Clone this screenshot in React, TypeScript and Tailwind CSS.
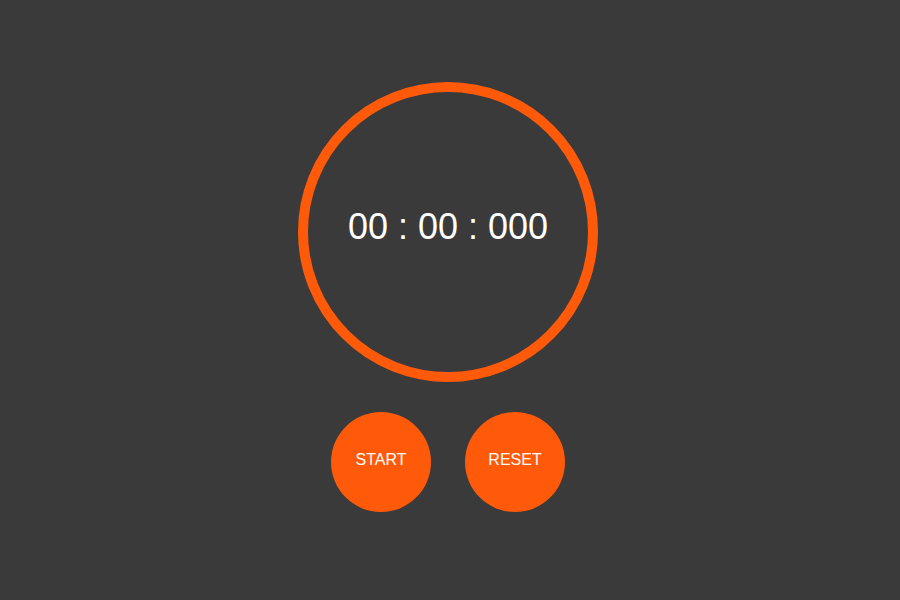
export default function App() {
  return (
    <div
      className="w-full h-[600px] bg-[#3a3a3a] flex flex-col items-center pt-[82px] pr-[4px]"
      style={{ fontFamily: '"Liberation Sans", Arial, sans-serif' }}
    >
      <div className="w-[300px] h-[300px] rounded-full border-[10px] border-[#ff5a0a] flex items-center justify-center box-border">
        <span className="text-[36px] text-white mb-[11px] whitespace-pre leading-none">00 : 00 : 000</span>
      </div>
      <div className="flex gap-[34px] mt-[30px]">
        <button className="w-[100px] h-[100px] rounded-full bg-[#ff5a0a] text-white text-[16px] flex items-center justify-center pb-[4px]">
          START
        </button>
        <button className="w-[100px] h-[100px] rounded-full bg-[#ff5a0a] text-white text-[16px] flex items-center justify-center pb-[4px]">
          RESET
        </button>
      </div>
    </div>
  );
}
